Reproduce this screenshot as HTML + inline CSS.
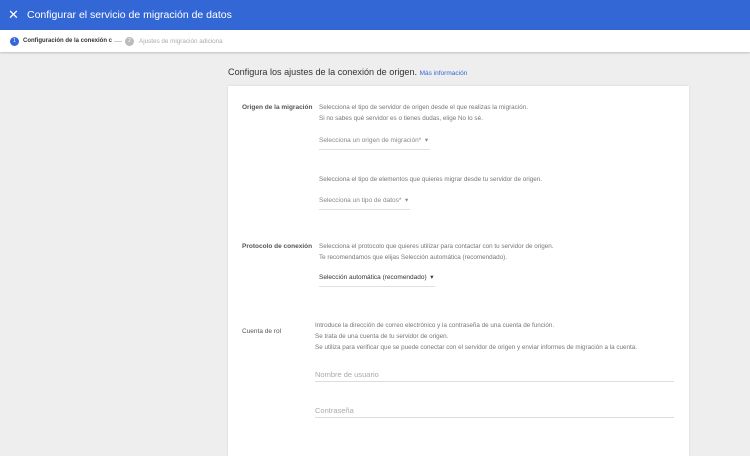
<!DOCTYPE html>
<html><head><meta charset="utf-8"><style>
*{margin:0;padding:0;box-sizing:border-box}
body{width:750px;height:447px;overflow:hidden;background:#eeeeee;font-family:"Liberation Sans",Arial,sans-serif;position:relative}
.a{position:absolute;white-space:nowrap}
.hdr{left:0;top:0;width:750px;height:30px;background:#3367d6}
.step{left:0;top:30px;width:750px;height:22px;background:#fff;box-shadow:0 1px 2px rgba(0,0,0,.2)}
.card{left:228px;top:86px;width:461px;height:370px;background:#fff;box-shadow:0 0 2px rgba(0,0,0,.12)}
.lab{font-size:6.5px;color:#555;font-weight:bold}
.t{font-size:6.3px;color:#777}
.dd{font-size:6.5px;color:#888;border-bottom:1px solid #e0e0e0;padding-bottom:5px}
.in{font-size:7.5px;color:#aaa;border-bottom:1px solid #ddd;width:359px;height:12px}
</style></head><body>
<div class="a hdr"></div>
<div class="a" style="left:8px;top:7px;color:#fff;font-size:13px">✕</div>
<div class="a" style="left:27px;top:9px;color:#fff;font-size:10.5px">Configurar el servicio de migración de datos</div>
<div class="a step"></div>
<div class="a" style="left:10px;top:37px;width:9px;height:9px;border-radius:50%;background:#3367d6;color:#fff;font-size:5px;text-align:center;line-height:9px">1</div>
<div class="a" style="left:23px;top:38px;font-size:6px;color:#333;font-weight:bold">Configuración de la conexión c</div>
<div class="a" style="left:114px;top:41px;width:8px;height:1px;background:#ccc"></div>
<div class="a" style="left:125px;top:37px;width:9px;height:9px;border-radius:50%;background:#bbb;color:#fff;font-size:5px;text-align:center;line-height:9px">2</div>
<div class="a" style="left:139px;top:38px;font-size:6.3px;color:#aaa">Ajustes de migración adiciona</div>
<div class="a" style="left:228px;top:67px;font-size:9.1px;color:#333">Configura los ajustes de la conexión de origen. <span style="font-size:6.5px;color:#3367d6">Más información</span></div>
<div class="a card"></div>
<div class="a lab" style="left:242px;top:104px">Origen de la migración</div>
<div class="a t" style="left:319px;top:104px">Selecciona el tipo de servidor de origen desde el que realizas la migración.</div>
<div class="a t" style="left:319px;top:115px">Si no sabes qué servidor es o tienes dudas, elige No lo sé.</div>
<div class="a dd" style="left:319px;top:136px;width:111px">Selecciona un origen de migración* &nbsp;▾</div>
<div class="a t" style="left:319px;top:176px">Selecciona el tipo de elementos que quieres migrar desde tu servidor de origen.</div>
<div class="a dd" style="left:319px;top:196px;width:91px">Selecciona un tipo de datos* &nbsp;▾</div>
<div class="a lab" style="left:242px;top:243px">Protocolo de conexión</div>
<div class="a t" style="left:319px;top:243px">Selecciona el protocolo que quieres utilizar para contactar con tu servidor de origen.</div>
<div class="a t" style="left:319px;top:254px">Te recomendamos que elijas Selección automática (recomendado).</div>
<div class="a dd" style="left:319px;top:273px;width:116px;color:#333">Selección automática (recomendado) &nbsp;▾</div>
<div class="a" style="left:242px;top:328px;font-size:6.5px;color:#555">Cuenta de rol</div>
<div class="a t" style="left:315px;top:322px">Introduce la dirección de correo electrónico y la contraseña de una cuenta de función.</div>
<div class="a t" style="left:315px;top:333px">Se trata de una cuenta de tu servidor de origen.</div>
<div class="a t" style="left:315px;top:344px">Se utiliza para verificar que se puede conectar con el servidor de origen y enviar informes de migración a la cuenta.</div>
<div class="a in" style="left:315px;top:370px">Nombre de usuario</div>
<div class="a in" style="left:315px;top:406px">Contraseña</div>
</body></html>
